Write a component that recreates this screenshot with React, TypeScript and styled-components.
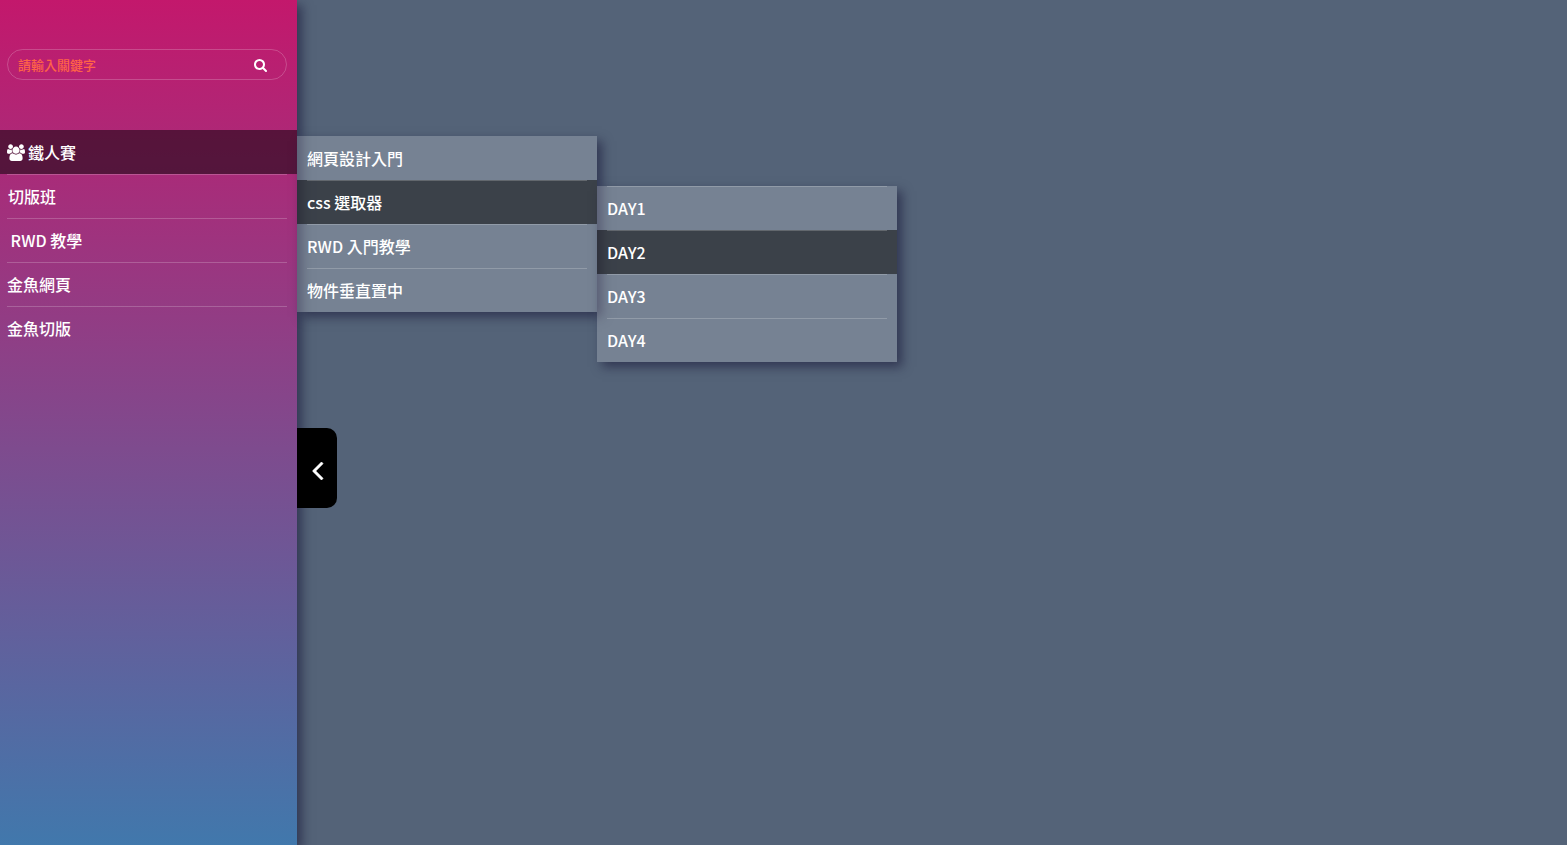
import React from "react";
import styled, { createGlobalStyle, css } from "styled-components";

const GlobalStyle = createGlobalStyle`
  *, *::before, *::after { box-sizing: border-box; }
  body {
    margin: 0;
    background: #546378;
    font-family: "Noto Sans CJK TC", "Noto Sans", sans-serif;
    font-size: 16px;
    font-weight: 500;
  }
`;

const panelShadow = css`
  box-shadow: 5px 5px 10px rgba(26, 26, 58, 0.6);
`;

const SideBar = styled.aside`
  position: relative;
  width: 297px;
  min-height: 100vh;
  background: linear-gradient(#c3186c, #4178ac);
  ${panelShadow}
`;

const SearchForm = styled.form`
  display: flex;
  align-items: center;
  height: 31px;
  margin: 0 10px 50px 7px;
  padding: 0 19px 0 10px;
  border: 1px solid rgba(255, 255, 255, 0.2);
  border-radius: 16px;
`;

const SideInner = styled.div`
  padding-top: 49px;
`;

const SearchInput = styled.input`
  flex: 1;
  min-width: 0;
  padding: 0;
  border: 0;
  outline: 0;
  background: transparent;
  color: #fff;
  font: inherit;
  font-size: 13px;
  &::placeholder { color: tomato; opacity: 1; }
`;

const SearchButton = styled.button`
  display: flex;
  padding: 2px 0 0;
  border: 0;
  background: transparent;
  color: #fff;
  cursor: pointer;
`;

const MenuList = styled.ul`
  margin: 0;
  padding: 0;
  list-style: none;
`;

const SubMenuList = styled(MenuList)`
  position: absolute;
  top: 6px;
  left: 100%;
  width: 300px;
  background: rgba(255, 255, 255, 0.2);
  ${panelShadow}
`;

const MenuItem = styled.li<{ $active?: boolean; $side?: boolean }>`
  position: relative;
  padding: ${(p) => (p.$side ? "0 10px 0 7px" : "0 10px")};
  background: ${(p) => (p.$active ? "rgba(0, 0, 0, 0.5)" : "transparent")};
`;

const MenuLink = styled.a<{ $line: boolean }>`
  display: flex;
  align-items: center;
  gap: 3px;
  height: 44px;
  padding-bottom: 2px;
  border-top: 1px solid ${(p) => (p.$line ? "rgba(255, 255, 255, 0.2)" : "transparent")};
  color: #fff;
  line-height: 24px;
  text-decoration: none;
  white-space: pre;
`;

const ToggleTab = styled.button`
  position: absolute;
  top: 428px;
  left: 100%;
  display: flex;
  align-items: center;
  justify-content: center;
  width: 40px;
  height: 80px;
  padding: 6px 0 0 2px;
  border: 0;
  border-radius: 0 10px 10px 0;
  background: #000;
  color: #fff;
  cursor: pointer;
`;

const UsersIcon = () => (
  <svg width="18" height="18" viewBox="0 0 1920 1792" preserveAspectRatio="xMidYMax meet" fill="currentColor" aria-hidden="true">
    <path d="M593 896q-162 5-265 128h-134q-82 0-138-40.500t-56-118.500q0-353 124-353 6 0 43.500 21t97.500 42.500 119 21.500q67 0 133-23-5 37-5 66 0 139 81 256zM1664 1533q0 120-73 189.500t-194 69.500h-874q-121 0-194-69.500t-73-189.500q0-53 3.500-103.500t14-109 26.500-108.500 43-97.500 62-81 85.500-53.500 111.500-20q10 0 43 21.500t73 48 107 48 135 21.500 135-21.500 107-48 73-48 43-21.500q61 0 111.500 20t85.500 53.500 62 81 43 97.500 26.500 108.500 14 109 3.500 103.500zM640 256q0 106-75 181t-181 75-181-75-75-181 75-181 181-75 181 75 75 181zM1344 640q0 159-112.500 271.500t-271.500 112.500-271.500-112.500-112.500-271.500 112.500-271.500 271.500-112.500 271.500 112.500 112.500 271.500zM1920 865q0 78-56 118.500t-138 40.500h-134q-103-123-265-128 81-117 81-256 0-29-5-66 66 23 133 23 59 0 119-21.500t97.500-42.500 43.500-21q124 0 124 353zM1792 256q0 106-75 181t-181 75-181-75-75-181 75-181 181-75 181 75 75 181z" />
  </svg>
);

const SearchIcon = () => (
  <svg width="13" height="13" viewBox="0 128 1664 1664" fill="currentColor" aria-hidden="true">
    <path d="M1152 832q0-185-131.500-316.500t-316.500-131.500-316.500 131.500-131.500 316.500 131.500 316.500 316.500 131.500 316.500-131.500 131.500-316.500zM1664 1664q0 52-38 90t-90 38q-54 0-90-38l-343-342q-179 124-399 124-143 0-273.500-55.500t-225-150-150-225-55.500-273.500 55.500-273.500 150-225 225-150 273.500-55.500 273.500 55.500 225 150 150 225 55.500 273.500q0 220-124 399l343 343q37 37 37 90z" />
  </svg>
);

const AngleLeftIcon = () => (
  <svg width="12" height="18" viewBox="10 456 672 1008" fill="currentColor" stroke="currentColor" strokeWidth="30" aria-hidden="true">
    <path d="M627 544q0 13-10 23l-393 393 393 393q10 10 10 23t-10 23l-50 50q-10 10-23 10t-23-10l-466-466q-10-10-10-23t10-23l466-466q10-10 23-10t23 10l50 50q10 10 10 23z" />
  </svg>
);

interface Entry {
  label: string;
  icon?: React.ReactNode;
  active?: boolean;
  children?: Entry[];
  firstLine?: boolean;
}

const menu: Entry[] = [
  {
    label: "鐵人賽",
    icon: <UsersIcon />,
    active: true,
    children: [
      { label: "網頁設計入門" },
      {
        label: "css 選取器",
        active: true,
        firstLine: true,
        children: [
          { label: "DAY1" },
          { label: "DAY2", active: true },
          { label: "DAY3" },
          { label: "DAY4" },
        ],
      },
      { label: "RWD 入門教學" },
      { label: "物件垂直置中" },
    ],
  },
  { label: "\u200a切版班" },
  { label: "\u00a0RWD 教學" },
  { label: "金魚網頁" },
  { label: "金魚切版" },
];

function Items({ entries, side, firstLine }: { entries: Entry[]; side?: boolean; firstLine?: boolean }) {
  return (
    <>
      {entries.map((entry, i) => (
        <MenuItem key={entry.label} $active={entry.active} $side={side}>
          <MenuLink href="#" $line={i > 0 || !!firstLine}>
            {entry.icon}
            <span>{entry.label}</span>
          </MenuLink>
          {entry.children && (
            <SubMenuList>
              <Items entries={entry.children} firstLine={entry.firstLine} />
            </SubMenuList>
          )}
        </MenuItem>
      ))}
    </>
  );
}

export default function App() {
  return (
    <>
      <GlobalStyle />
      <SideBar>
        <SideInner>
          <SearchForm role="search" onSubmit={(e) => e.preventDefault()}>
            <SearchInput type="text" placeholder="請輸入關鍵字" aria-label="請輸入關鍵字" />
            <SearchButton type="submit" aria-label="搜尋">
              <SearchIcon />
            </SearchButton>
          </SearchForm>
          <nav>
            <MenuList>
              <Items entries={menu} side />
            </MenuList>
          </nav>
        </SideInner>
        <ToggleTab type="button" aria-label="收合選單">
          <AngleLeftIcon />
        </ToggleTab>
      </SideBar>
    </>
  );
}
